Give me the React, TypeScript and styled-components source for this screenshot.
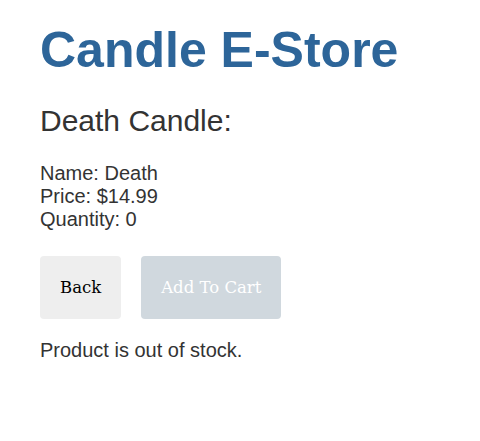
import React from "react";
import styled, { createGlobalStyle } from "styled-components";

const Global = createGlobalStyle`
  html, body { margin: 0; padding: 0; background: #ffffff; }
  body { font-family: "Liberation Sans", Arial, sans-serif; color: #333333; }
`;

const Page = styled.main`
  display: flex;
  flex-direction: column;
  align-items: flex-start;
  padding: 22px 40px 40px;
`;

const Title = styled.h1`
  margin: 0;
  font-size: 50px;
  font-weight: 700;
  line-height: 57.5px;
  color: #2d6599;
`;

const Heading = styled.h2`
  margin: 24px 0 0;
  font-size: 30px;
  font-weight: 400;
  line-height: 34.5px;
  color: #333333;
`;

const Details = styled.div`
  margin-top: 24px;
  display: flex;
  flex-direction: column;
  font-size: 20px;
  line-height: 23px;
`;

const Actions = styled.div`
  margin-top: 25px;
  display: flex;
  gap: 20px;
`;

const Button = styled.button<{ $disabled?: boolean }>`
  font-family: "DejaVu Serif", serif;
  font-size: 16.5px;
  line-height: 19px;
  height: 63px;
  padding: 0 20px;
  border: none;
  border-radius: 4px;
  background: ${(p) => (p.$disabled ? "#d0d8de" : "#eeeeee")};
  color: ${(p) => (p.$disabled ? "#ffffff" : "#000000")};
  cursor: ${(p) => (p.$disabled ? "default" : "pointer")};
`;

const Notice = styled.p`
  margin: 20px 0 0;
  font-size: 20px;
  line-height: 23px;
`;

export default function App() {
  return (
    <>
      <Global />
      <Page>
        <Title>Candle E-Store</Title>
        <Heading>Death Candle:</Heading>
        <Details>
          <span>Name: Death</span>
          <span>Price: $14.99</span>
          <span>Quantity: 0</span>
        </Details>
        <Actions>
          <Button>Back</Button>
          <Button $disabled disabled>
            Add To Cart
          </Button>
        </Actions>
        <Notice>Product is out of stock.</Notice>
      </Page>
    </>
  );
}
